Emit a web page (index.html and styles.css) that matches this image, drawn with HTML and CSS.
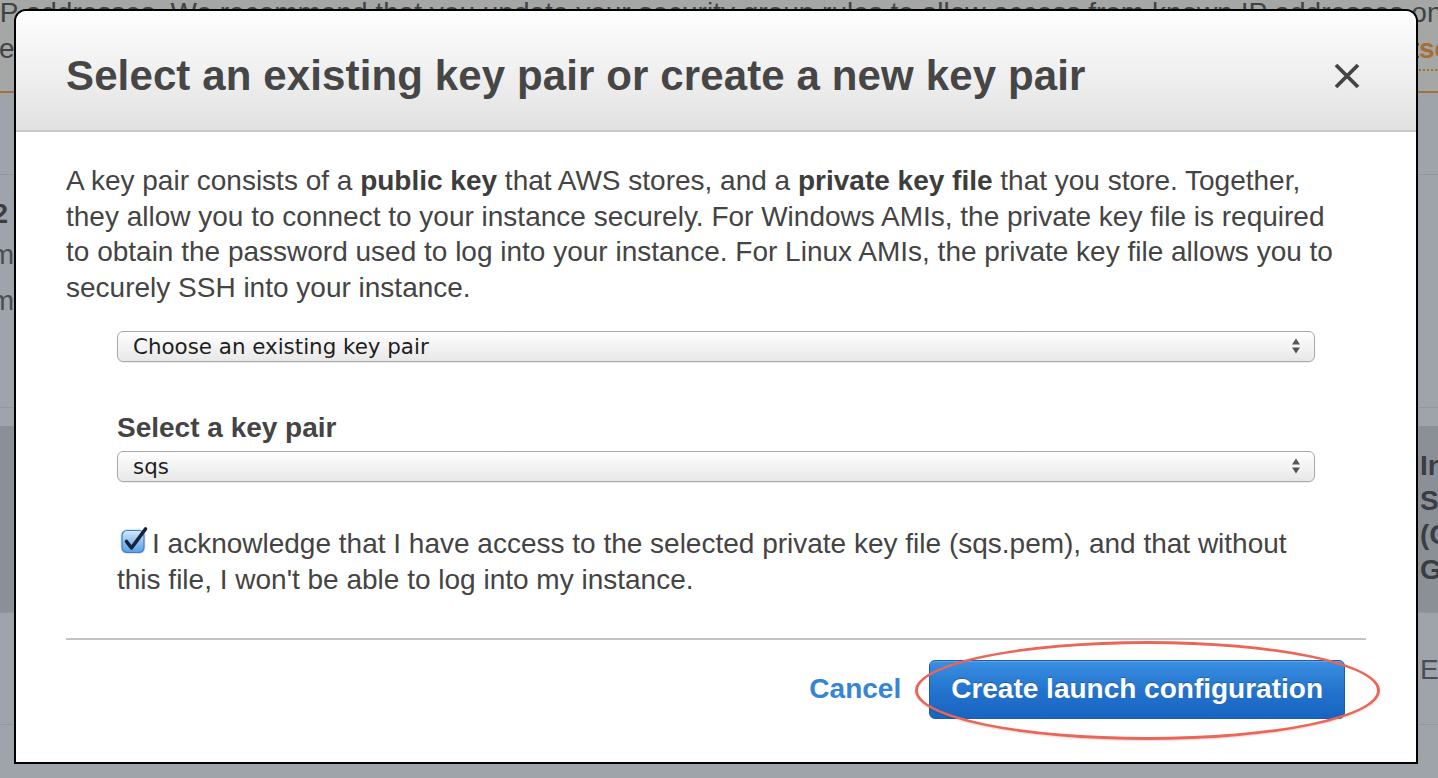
FILE: index.html
```html
<!DOCTYPE html>
<html lang="en">
<head>
<meta charset="utf-8">
<title>Select an existing key pair or create a new key pair</title>
<link rel="stylesheet" href="styles.css">
</head>
<body>
<div class="page">
  <div class="notice">
    <p class="notice-line first">IP addresses. We recommend that you update your security group rules to allow access from known IP addresses only.</p>
    <div class="notice-line notice-row">
      <span class="notice-left">ecurity groups can be changed at any time. You can also open additional ports in your security group to facilitate access.</span>
      <a class="notice-link" href="#">security groups</a>
    </div>
  </div>
  <div class="row row-a"></div>
  <div class="row row-b">
    <div class="cell-left">
      <div class="b-head">Step 2</div>
      <div class="b-line">Platform</div>
      <div class="b-line">Custom</div>
    </div>
  </div>
  <div class="row row-c"></div>
  <div class="row row-d">
    <div class="cell-right bold-lines">
      <div>Instance</div>
      <div>Storage</div>
      <div>(GiB)</div>
      <div>GiB</div>
    </div>
  </div>
  <div class="row row-e">
    <div class="cell-right e-line">EBS only</div>
  </div>
  <div class="row row-f"></div>
</div>

<div class="modal" role="dialog" aria-labelledby="modal-title">
  <div class="modal-header">
    <h1 class="modal-title" id="modal-title">Select an existing key pair or create a new key pair</h1>
    <svg class="close" viewBox="0 0 28 28" aria-label="Close">
      <path d="M3 3 L25 25 M25 3 L3 25" stroke="#444" stroke-width="3.8" stroke-linecap="butt" fill="none"/>
    </svg>
  </div>
  <div class="modal-body">
    <p class="intro">A key pair consists of a <b>public key</b> that AWS stores, and a <b>private key file</b> that you store. Together, they allow you to connect to your instance securely. For Windows AMIs, the private key file is required to obtain the password used to log into your instance. For Linux AMIs, the private key file allows you to securely SSH into your instance.</p>
    <div class="form">
      <div class="select">
        <span>Choose an existing key pair</span>
        <svg class="arrows" viewBox="0 0 10 18"><path d="M5 1.5 L9 7.5 L1 7.5 Z M1 10.5 L9 10.5 L5 16.5 Z" fill="#555"/></svg>
      </div>
      <div class="label">Select a key pair</div>
      <div class="select select-2">
        <span>sqs</span>
        <svg class="arrows" viewBox="0 0 10 18"><path d="M5 1.5 L9 7.5 L1 7.5 Z M1 10.5 L9 10.5 L5 16.5 Z" fill="#555"/></svg>
      </div>
      <p class="ack"><svg class="checkbox" viewBox="0 0 30 30">
          <defs>
            <linearGradient id="cbg" x1="0" y1="0" x2="0" y2="1">
              <stop offset="0" stop-color="#d6eafc"/>
              <stop offset="0.5" stop-color="#8fc2f1"/>
              <stop offset="1" stop-color="#5a9fe3"/>
            </linearGradient>
          </defs>
          <rect x="1.5" y="3" width="25" height="25" rx="6" fill="#bcd9f5" opacity="0.6"/>
          <rect x="3" y="4.5" width="22" height="22" rx="5" fill="url(#cbg)" stroke="#3f7fc6" stroke-width="1.2"/>
          <path d="M7.5 15.5 L12.5 22 L26.5 3" stroke="#16233d" stroke-width="3.6" fill="none" stroke-linecap="round" stroke-linejoin="round"/>
        </svg>I acknowledge that I have access to the selected private key file (sqs.pem), and that without this file, I won't be able to log into my instance.</p>
    </div>
    <hr class="divider">
    <div class="footer">
      <a class="cancel" href="#">Cancel</a>
      <div class="btn-wrap">
        <button class="btn" type="button">Create launch configuration</button>
        <span class="ring" aria-hidden="true"></span>
      </div>
    </div>
  </div>
</div>
</body>
</html>
```
FILE: styles.css
```css
* { box-sizing: border-box; }

html, body {
  margin: 0;
  padding: 0;
}

body {
  width: 1438px;
  height: 778px;
  overflow: hidden;
  position: relative;
  font-family: "Liberation Sans", Helvetica, Arial, sans-serif;
  background: #9fa3aa;
  color: #3e4247;
}

/* ---------- dimmed background page ---------- */
.page {
  height: 778px;
  overflow: hidden;
  display: flex;
  flex-direction: column;
}

.notice {
  flex: none;
  margin-top: -5px;
  padding-bottom: 20px;
  background: #a4a7a6;
  border-bottom: 2px solid #a66f37;
  font-size: 28px;
  line-height: 36px;
  white-space: nowrap;
  color: #404346;
}

.notice-line {
  margin: 0;
}

.notice-line.first {
  text-indent: -8px;
}

.notice-row {
  display: flex;
}

.notice-left {
  flex: none;
  width: 1420px;
  overflow: hidden;
  margin-left: -1px;
}

.notice-link {
  flex: none;
  color: #a86d33;
  font-weight: bold;
  text-decoration: none;
  border-bottom: 2px dotted #a86d33;
  padding-bottom: 2px;
  align-self: baseline;
}

.row {
  flex: none;
  display: flex;
  justify-content: space-between;
  border-bottom: 1px solid #92969d;
  font-size: 28px;
  white-space: nowrap;
}

.row-a { height: 82px; }
.row-b { height: 233px; padding-top: 21px; }
.row-c { height: 18px; border-bottom: 0; }
.row-d { height: 187px; background: #8b9097; padding-top: 23px; justify-content: flex-end; }
.row-e { height: 112px; padding-top: 39px; justify-content: flex-end; }
.row-f { flex: 1; border-bottom: 0; }

.cell-left {
  flex: none;
  width: 14px;
  display: flex;
  flex-direction: column;
  align-items: flex-end;
}

.b-head {
  font-weight: bold;
  line-height: 36px;
  margin-right: 6px;
  color: #3a3d42;
}

.b-line {
  line-height: 46px;
  color: #4a4e54;
}

.cell-right {
  flex: none;
  width: 18px;
}

.bold-lines {
  font-weight: bold;
  line-height: 34.7px;
  color: #3a3d42;
}

.e-line {
  line-height: 36px;
  color: #4a4e54;
}

/* ---------- modal ---------- */
.modal {
  position: absolute;
  left: 14px;
  top: 9px;
  width: 1404px;
  background: #fff;
  border: 2px solid #000;
  border-radius: 12px 12px 0 0;
  overflow: hidden;
  color: #444;
}

.modal-header {
  display: flex;
  justify-content: space-between;
  align-items: flex-start;
  padding: 44px 55px 33px 50px;
  background: linear-gradient(#fefefe, #e2e2e2);
  border-bottom: 2px solid #c8c8c8;
}

.modal-title {
  margin: 0;
  font-size: 42px;
  line-height: 42px;
  font-weight: bold;
  letter-spacing: 0.12px;
  color: #464646;
}

.close {
  flex: none;
  width: 28px;
  height: 28px;
  margin-top: 7px;
}

.modal-body {
  padding: 31px 50px 0;
}

.intro {
  margin: 0;
  max-width: 1288px;
  font-size: 28px;
  line-height: 35.7px;
}

.intro b {
  color: #3d3d3d;
}

.form {
  padding: 0 51px;
}

.select {
  display: flex;
  align-items: center;
  justify-content: space-between;
  height: 31px;
  margin-top: 25px;
  padding: 0 13px 0 15px;
  border: 1px solid #a9a9a9;
  border-radius: 6px;
  background: linear-gradient(#ffffff, #f3f3f3 50%, #e8e8e8);
  box-shadow: 0 1px 1px rgba(0, 0, 0, 0.08);
  font-family: "DejaVu Sans", "Liberation Sans", sans-serif;
  font-size: 21.4px;
  color: #1e1e1e;
}

.select-2 {
  margin-top: 0;
}

.arrows {
  flex: none;
  width: 10px;
  height: 18px;
}

.label {
  margin: 49px 0 6px;
  font-size: 28px;
  line-height: 34px;
  font-weight: bold;
  color: #444;
}

.ack {
  margin: 44px 0 0;
  font-size: 28px;
  line-height: 36px;
}

.checkbox {
  display: inline-block;
  width: 30px;
  height: 30px;
  vertical-align: -3px;
  margin: 0 3px 0 2px;
}

.divider {
  margin: 40px 0 0;
  border: 0;
  border-top: 2px solid #c4c4c4;
  height: 0;
}

.footer {
  display: flex;
  justify-content: flex-end;
  align-items: center;
  gap: 28px;
  padding: 20px 21px 43px 0;
}

.cancel {
  font-size: 28px;
  font-weight: bold;
  color: #3485d6;
  text-decoration: none;
}

.btn-wrap {
  position: relative;
}

.btn {
  display: block;
  height: 59px;
  padding: 0 21px;
  border: 1px solid #1c5cab;
  border-radius: 6px;
  background: linear-gradient(#3a90e2, #2272cc 55%, #1865c1);
  color: #fff;
  font-family: "Liberation Sans", Helvetica, Arial, sans-serif;
  font-size: 28px;
  font-weight: bold;
  text-shadow: 0 -1px 0 rgba(0, 0, 0, 0.25);
  box-shadow: inset 0 1px 0 rgba(255, 255, 255, 0.2);
}

.ring {
  position: absolute;
  left: -14px;
  top: -19px;
  width: 465px;
  height: 99px;
  border: 3px solid #eb6657;
  border-radius: 50%;
  box-shadow: 0 1px 2px rgba(0, 0, 0, 0.15);
  pointer-events: none;
}
```
